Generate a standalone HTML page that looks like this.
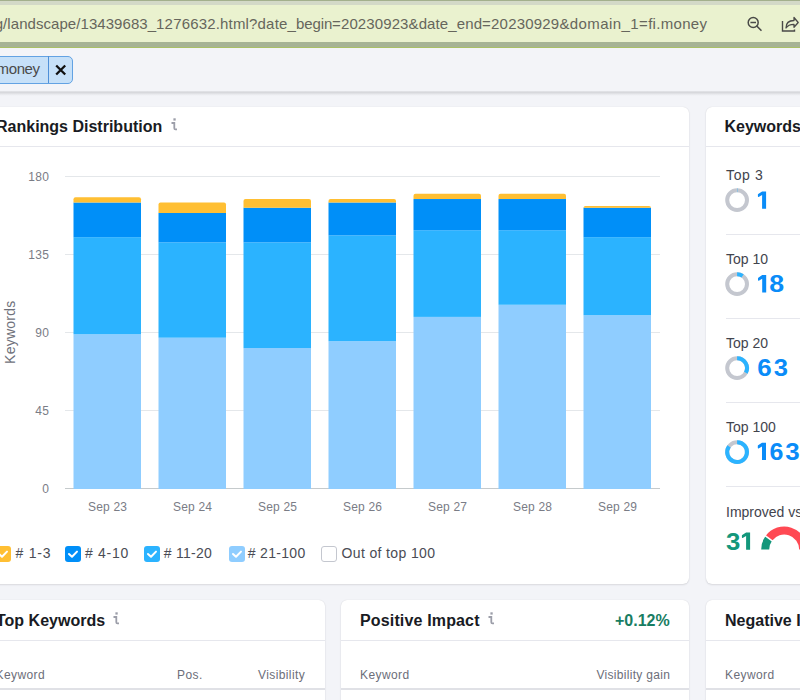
<!DOCTYPE html>
<html><head><meta charset="utf-8">
<style>
*{margin:0;padding:0;box-sizing:border-box}
html,body{width:800px;height:700px;overflow:hidden}
body{background:#f3f4f8;font-family:"Liberation Sans",sans-serif;position:relative;color:#191b23}
.abs{position:absolute}
#urlbar{left:0;top:0;width:800px;height:48px;background:#eaf2cf}
#urlbar .l0{left:0;top:0;width:800px;height:1px;background:#a3b08c}
#urlbar .l1{left:0;top:1px;width:800px;height:4px;background:#d3d9c7}
#urlbar .b1{left:0;top:42px;width:800px;height:5px;background:#a6b395}
#urlbar .b2{left:0;top:47px;width:800px;height:1px;background:#a9c066}
#url{left:0;top:13.5px;font-size:15px;color:#66665c;white-space:nowrap;line-height:20px;width:730px;height:20px}
#url span{position:absolute;top:0}
#shadow{left:0;top:91px;width:800px;height:5px;background:linear-gradient(#e4e5e9,#d7d8dc 30%,#e2e3e7 55%,#eeeff3 80%,#f3f4f8)}
.card{position:absolute;background:#fff;border-radius:6px;box-shadow:0 0 1px rgba(25,27,35,0.15),0 1px 2px rgba(25,27,35,0.11)}
.title{position:absolute;font-weight:bold;font-size:16px;line-height:20px;color:#191b23;white-space:nowrap}
.sep{position:absolute;height:1px;background:#e6e7ed}
.info{position:absolute;font-family:"Liberation Serif",serif;font-style:italic;font-size:15px;color:#a3a5ad;line-height:16px}
.lbl{position:absolute;font-size:12px;color:#7a7c86;white-space:nowrap;line-height:14px}
.leg{position:absolute;font-size:14px;color:#4a4c55;white-space:nowrap;line-height:16px;letter-spacing:0.5px}
.cb{position:absolute;width:16px;height:16px;border-radius:3px}
.th{position:absolute;font-size:12px;color:#6c6e79;white-space:nowrap;line-height:16px;letter-spacing:0.4px}
.kl{position:absolute;font-size:14px;color:#42444d;white-space:nowrap;line-height:16px}
.kn{position:absolute;font-size:24px;font-weight:bold;color:#0a8cf8;white-space:nowrap;line-height:28px;transform:scaleX(1.08);transform-origin:0 0;letter-spacing:1.4px}
</style></head><body>

<div id="urlbar" class="abs">
  <div class="abs l0"></div><div class="abs l1"></div>
  <div class="abs b1"></div><div class="abs b2"></div>
  <div id="url" class="abs"><span style="left:-5.3px;letter-spacing:0.06px">g/landscape/13439683_</span><span style="left:156.1px;letter-spacing:0.175px">1276632.html</span><span style="left:249.1px;letter-spacing:0.17px">?date_</span><span style="left:296px;letter-spacing:-0.12px">begin</span><span style="left:332.1px;letter-spacing:0.107px">=20230923&amp;date_end</span><span style="left:482.1px;letter-spacing:0.2px">=20230929</span><span style="left:559.4px;letter-spacing:0.42px">&amp;domain_1</span><span style="left:639.1px;letter-spacing:0.3px">=fi.money</span></div>
  <svg class="abs" style="left:740px;top:10px" width="60" height="28" viewBox="740 10 60 28">
    <circle cx="753.2" cy="22.5" r="5" fill="none" stroke="#4a4a48" stroke-width="1.5"/>
    <line x1="750.4" y1="22.5" x2="756" y2="22.5" stroke="#4a4a48" stroke-width="1.5"/>
    <line x1="757" y1="26.2" x2="761" y2="30.3" stroke="#4a4a48" stroke-width="1.6" stroke-linecap="round"/>
    <path d="M782.5 21 V31 H794.5 V29.5" fill="none" stroke="#4a4a48" stroke-width="1.4"/>
    <path d="M786 28 C786 23 789 20.5 794 20.5 V17.5 L798.2 22.5 L794 27.3 V24.3 C790 24.3 787.5 25.5 786 28 Z" fill="none" stroke="#4a4a48" stroke-width="1.3" stroke-linejoin="round"/>
  </svg>
</div>

<!-- filter tag -->
<div class="abs" style="left:-60px;top:55.5px;width:133px;height:28px;background:#c6e0f8;border:1px solid #62a2e3;border-radius:5px"></div>
<div class="abs" style="left:48px;top:56px;width:1.3px;height:26.5px;background:#4f90d8"></div>
<div class="abs" style="left:-3.4px;top:60px;font-size:15px;line-height:18px;color:#4a4a4a;white-space:nowrap;letter-spacing:-0.4px">money</div>
<svg class="abs" style="left:55px;top:64px" width="12" height="12" viewBox="0 0 12 12"><path d="M1.2 1.5 L10.2 10.5 M10.2 1.5 L1.2 10.5" stroke="#111" stroke-width="2.3"/></svg>

<div id="shadow" class="abs"></div>

<!-- Rankings distribution card -->
<div class="card" style="left:-40px;top:106.5px;width:729px;height:477.5px"></div>
<div class="title" style="left:-4px;top:117px">Rankings Distribution</div>
<svg class="info" style="left:170.6px;top:118px" width="7" height="13" viewBox="0 0 7 13"><rect x="2.4" y="0.3" width="2.3" height="2.3" fill="#9c9ea9"/><path d="M0.5 5 H3.3 V10.2 Q3.3 11.3 4.4 11.3 H6" fill="none" stroke="#9c9ea9" stroke-width="1.8"/></svg>
<div class="sep" style="left:0;top:146px;width:689px"></div>

<svg class="abs" style="left:0;top:150px" width="689" height="360" viewBox="0 150 689 360">
  <g stroke="#e4e7ea" stroke-width="1">
    <line x1="65" y1="176.5" x2="660" y2="176.5"/>
    <line x1="65" y1="254.5" x2="660" y2="254.5"/>
    <line x1="65" y1="332.5" x2="660" y2="332.5"/>
    <line x1="65" y1="410.5" x2="660" y2="410.5"/>
  </g>
  <line x1="65" y1="488.5" x2="660" y2="488.5" stroke="#c5cacc" stroke-width="1"/>
  <g id="bars">
<rect x="73.5" y="334.23" width="67.5" height="154.77" fill="#8fcdff"/>
<rect x="73.5" y="237.17" width="67.5" height="97.07" fill="#2bb3ff"/>
<rect x="73.5" y="202.50" width="67.5" height="34.67" fill="#008ff8"/>
<path d="M73.5 202.50 V199.30 Q73.5 197.30 75.5 197.30 H139.0 Q141.0 197.30 141.0 199.30 V202.50 Z" fill="#ffbf33"/>
<rect x="158.5" y="337.70" width="67.5" height="151.30" fill="#8fcdff"/>
<rect x="158.5" y="242.37" width="67.5" height="95.33" fill="#2bb3ff"/>
<rect x="158.5" y="212.90" width="67.5" height="29.47" fill="#008ff8"/>
<path d="M158.5 212.90 V204.50 Q158.5 202.50 160.5 202.50 H224.0 Q226.0 202.50 226.0 204.50 V212.90 Z" fill="#ffbf33"/>
<rect x="243.5" y="348.10" width="67.5" height="140.90" fill="#8fcdff"/>
<rect x="243.5" y="242.37" width="67.5" height="105.73" fill="#2bb3ff"/>
<rect x="243.5" y="207.70" width="67.5" height="34.67" fill="#008ff8"/>
<path d="M243.5 207.70 V201.03 Q243.5 199.03 245.5 199.03 H309.0 Q311.0 199.03 311.0 201.03 V207.70 Z" fill="#ffbf33"/>
<rect x="328.5" y="341.17" width="67.5" height="147.83" fill="#8fcdff"/>
<rect x="328.5" y="235.43" width="67.5" height="105.73" fill="#2bb3ff"/>
<rect x="328.5" y="202.50" width="67.5" height="32.93" fill="#008ff8"/>
<path d="M328.5 202.50 V201.03 Q328.5 199.03 330.5 199.03 H394.0 Q396.0 199.03 396.0 201.03 V202.50 Z" fill="#ffbf33"/>
<rect x="413.5" y="316.90" width="67.5" height="172.10" fill="#8fcdff"/>
<rect x="413.5" y="230.23" width="67.5" height="86.67" fill="#2bb3ff"/>
<rect x="413.5" y="199.03" width="67.5" height="31.20" fill="#008ff8"/>
<path d="M413.5 199.03 V195.83 Q413.5 193.83 415.5 193.83 H479.0 Q481.0 193.83 481.0 195.83 V199.03 Z" fill="#ffbf33"/>
<rect x="498.5" y="304.77" width="67.5" height="184.23" fill="#8fcdff"/>
<rect x="498.5" y="230.23" width="67.5" height="74.53" fill="#2bb3ff"/>
<rect x="498.5" y="199.03" width="67.5" height="31.20" fill="#008ff8"/>
<path d="M498.5 199.03 V195.83 Q498.5 193.83 500.5 193.83 H564.0 Q566.0 193.83 566.0 195.83 V199.03 Z" fill="#ffbf33"/>
<rect x="583.5" y="315.17" width="67.5" height="173.83" fill="#8fcdff"/>
<rect x="583.5" y="237.17" width="67.5" height="78.00" fill="#2bb3ff"/>
<rect x="583.5" y="207.70" width="67.5" height="29.47" fill="#008ff8"/>
<path d="M583.5 207.70 V207.97 Q583.5 205.97 585.5 205.97 H649.0 Q651.0 205.97 651.0 207.97 V207.70 Z" fill="#ffbf33"/></g>
</svg>

<div class="lbl" style="left:9.4px;width:40px;text-align:right;letter-spacing:0.4px;top:170px">180</div>
<div class="lbl" style="left:9.4px;width:40px;text-align:right;letter-spacing:0.4px;top:248px">135</div>
<div class="lbl" style="left:9.4px;width:40px;text-align:right;letter-spacing:0.4px;top:326px">90</div>
<div class="lbl" style="left:9.4px;width:40px;text-align:right;letter-spacing:0.4px;top:404px">45</div>
<div class="lbl" style="left:9.4px;width:40px;text-align:right;letter-spacing:0.4px;top:482px">0</div>
<svg class="abs" style="left:0;top:290px" width="25" height="85" viewBox="0 290 25 85"><text transform="translate(15 332.2) rotate(-90)" text-anchor="middle" font-family="Liberation Sans" font-size="14" letter-spacing="0.25" fill="#6f717b">Keywords</text></svg>

<div class="lbl" style="left:88px;top:500px;letter-spacing:0.2px">Sep 23</div>
<div class="lbl" style="left:173px;top:500px;letter-spacing:0.2px">Sep 24</div>
<div class="lbl" style="left:258px;top:500px;letter-spacing:0.2px">Sep 25</div>
<div class="lbl" style="left:343px;top:500px;letter-spacing:0.2px">Sep 26</div>
<div class="lbl" style="left:428px;top:500px;letter-spacing:0.2px">Sep 27</div>
<div class="lbl" style="left:513px;top:500px;letter-spacing:0.2px">Sep 28</div>
<div class="lbl" style="left:598px;top:500px;letter-spacing:0.2px">Sep 29</div>

<!-- legend -->
<div class="cb" style="left:-5px;top:546px;background:#ffbf33"><svg width="16" height="16" viewBox="0 0 16 16" style="position:absolute;left:0;top:0"><path d="M4 8 L7 10.8 L12 5.6" fill="none" stroke="#fff" stroke-width="2" stroke-linecap="round" stroke-linejoin="round"/></svg></div>
<div class="leg" style="left:15.5px;top:544.5px;letter-spacing:0.78px">#&nbsp;1-3</div>
<div class="cb" style="left:65px;top:546px;background:#008ff8"><svg width="16" height="16" viewBox="0 0 16 16" style="position:absolute;left:0;top:0"><path d="M4 8 L7 10.8 L12 5.6" fill="none" stroke="#fff" stroke-width="2" stroke-linecap="round" stroke-linejoin="round"/></svg></div>
<div class="leg" style="left:85px;top:544.5px;letter-spacing:0.7px">#&nbsp;4-10</div>
<div class="cb" style="left:144px;top:546px;background:#2bb3ff"><svg width="16" height="16" viewBox="0 0 16 16" style="position:absolute;left:0;top:0"><path d="M4 8 L7 10.8 L12 5.6" fill="none" stroke="#fff" stroke-width="2" stroke-linecap="round" stroke-linejoin="round"/></svg></div>
<div class="leg" style="left:163.8px;top:544.5px;letter-spacing:0.27px">#&nbsp;11-20</div>
<div class="cb" style="left:228.5px;top:546px;background:#8fcdff"><svg width="16" height="16" viewBox="0 0 16 16" style="position:absolute;left:0;top:0"><path d="M4 8 L7 10.8 L12 5.6" fill="none" stroke="#fff" stroke-width="2" stroke-linecap="round" stroke-linejoin="round"/></svg></div>
<div class="leg" style="left:247.8px;top:544.5px;letter-spacing:0.31px">#&nbsp;21-100</div>
<div class="cb" style="left:321px;top:546px;background:#fff;border:1px solid #c4c7cf"></div>
<div class="leg" style="left:341.5px;top:544.5px;letter-spacing:0.37px">Out of top 100</div>

<!-- Keywords card -->
<div class="card" style="left:705.5px;top:106.5px;width:200px;height:477.5px"></div>
<div class="title" style="left:724.5px;top:117px">Keywords</div>
<div class="sep" style="left:706px;top:146px;width:94px"></div>

<div id="kw">
<div class="kl" style="left:726px;top:167px;letter-spacing:0.65px">Top 3</div>
<div class="sep" style="left:726px;top:234px;width:74px"></div>
<div class="kl" style="left:726px;top:251px">Top 10</div>
<div class="sep" style="left:726px;top:318px;width:74px"></div>
<div class="kl" style="left:726px;top:335px">Top 20</div>
<div class="sep" style="left:726px;top:402px;width:74px"></div>
<div class="kl" style="left:726px;top:419px">Top 100</div>
<div class="sep" style="left:726px;top:486px;width:74px"></div>
<div class="kl" style="left:726px;top:504px">Improved vs</div>
<svg class="abs" style="left:706px;top:147px" width="94" height="440" viewBox="706 147 94 440">
<circle cx="737.1" cy="200.1" r="9.9" fill="none" stroke="#c4c7cf" stroke-width="4"/>
<path d="M737.10 190.20 A9.9 9.9 0 0 1 737.42 190.21" fill="none" stroke="#2bb3ff" stroke-width="4"/>
<path transform="translate(757.90 191.40) scale(1 1.018)" d="M0.3 2.5 L4.2 0 H8.2 V17 H4.2 V3.6 L1.2 5.3 Q0 5.9 0 4.8 V3.3 Q0 2.8 0.3 2.5 Z" fill="#0a8cf8"/>
<circle cx="737.1" cy="284.1" r="9.9" fill="none" stroke="#c4c7cf" stroke-width="4"/>
<path d="M737.10 274.20 A9.9 9.9 0 0 1 742.60 275.87" fill="none" stroke="#2bb3ff" stroke-width="4"/>
<path transform="translate(758.00 275.10) scale(1 1.018)" d="M0.3 2.5 L4.2 0 H8.2 V17 H4.2 V3.6 L1.2 5.3 Q0 5.9 0 4.8 V3.3 Q0 2.8 0.3 2.5 Z" fill="#0a8cf8"/>
<text transform="translate(769.17 292.40) scale(1.113 1.018)" font-family="Liberation Sans" font-weight="bold" font-size="24" fill="#0a8cf8">8</text>
<circle cx="737.1" cy="368.1" r="9.9" fill="none" stroke="#c4c7cf" stroke-width="4"/>
<path d="M737.10 358.20 A9.9 9.9 0 0 1 745.83 372.77" fill="none" stroke="#2bb3ff" stroke-width="4"/>
<text transform="translate(757.28 376.20) scale(1.081 1.018)" font-family="Liberation Sans" font-weight="bold" font-size="24" fill="#0a8cf8">6</text>
<text transform="translate(773.68 376.20) scale(1.065 1.018)" font-family="Liberation Sans" font-weight="bold" font-size="24" fill="#0a8cf8">3</text>
<circle cx="737.1" cy="452.1" r="9.9" fill="none" stroke="#c4c7cf" stroke-width="4"/>
<path d="M737.10 442.20 A9.9 9.9 0 1 1 729.05 446.33" fill="none" stroke="#2bb3ff" stroke-width="4"/>
<path transform="translate(757.80 442.80) scale(1 1.018)" d="M0.3 2.5 L4.2 0 H8.2 V17 H4.2 V3.6 L1.2 5.3 Q0 5.9 0 4.8 V3.3 Q0 2.8 0.3 2.5 Z" fill="#0a8cf8"/>
<text transform="translate(769.59 460.10) scale(1.040 1.018)" font-family="Liberation Sans" font-weight="bold" font-size="24" fill="#0a8cf8">6</text>
<text transform="translate(785.28 460.10) scale(1.081 1.018)" font-family="Liberation Sans" font-weight="bold" font-size="24" fill="#0a8cf8">3</text>
<text transform="translate(725.98 549.70) scale(1.073 1.018)" font-family="Liberation Sans" font-weight="bold" font-size="24" fill="#13977b">3</text>
<path transform="translate(741.90 532.40) scale(1 1.018)" d="M0.3 2.5 L4.2 0 H8.2 V17 H4.2 V3.6 L1.2 5.3 Q0 5.9 0 4.8 V3.3 Q0 2.8 0.3 2.5 Z" fill="#13977b"/>
<path d="M765.2 549.5 A19 19 0 0 1 768.83 538.33" fill="none" stroke="#13977b" stroke-width="8"/>
<path d="M768.83 538.33 A19 19 0 0 1 803.2 549.5" fill="none" stroke="#ff4953" stroke-width="8"/>
<line x1="772.87" y1="541.27" x2="764.78" y2="535.39" stroke="#fff" stroke-width="1.5"/>
</svg>
</div>

<!-- bottom cards -->
<div class="card" style="left:-40px;top:600px;width:364.8px;height:200px"></div>
<div class="title" style="left:-4px;top:611px">Top Keywords</div>
<svg class="info" style="left:112.6px;top:612px" width="7" height="13" viewBox="0 0 7 13"><rect x="2.4" y="0.3" width="2.3" height="2.3" fill="#9c9ea9"/><path d="M0.5 5 H3.3 V10.2 Q3.3 11.3 4.4 11.3 H6" fill="none" stroke="#9c9ea9" stroke-width="1.8"/></svg>
<div class="sep" style="left:0;top:640px;width:325px"></div>
<div class="th" style="left:-4.5px;top:666.5px">Keyword</div>
<div class="th" style="left:177px;top:666.5px">Pos.</div>
<div class="th" style="left:258px;top:666.5px">Visibility</div>
<div class="sep" style="left:0;top:688px;width:325px;height:2px;background:#e0e1e6"></div>

<div class="card" style="left:340.8px;top:600px;width:348.6px;height:200px"></div>
<div class="title" style="left:360px;top:611px;letter-spacing:0.15px">Positive Impact</div>
<svg class="info" style="left:487.6px;top:612px" width="7" height="13" viewBox="0 0 7 13"><rect x="2.4" y="0.3" width="2.3" height="2.3" fill="#9c9ea9"/><path d="M0.5 5 H3.3 V10.2 Q3.3 11.3 4.4 11.3 H6" fill="none" stroke="#9c9ea9" stroke-width="1.8"/></svg>
<div class="title" style="left:615px;top:611px;color:#187d62">+0.12%</div>
<div class="sep" style="left:341px;top:640px;width:348px"></div>
<div class="th" style="left:360px;top:666.5px">Keyword</div>
<div class="th" style="left:596.5px;top:666.5px;letter-spacing:0.3px">Visibility gain</div>
<div class="sep" style="left:341px;top:688px;width:348px;height:2px;background:#e0e1e6"></div>

<div class="card" style="left:705.6px;top:600px;width:200px;height:200px"></div>
<div class="title" style="left:725px;top:611px">Negative Impact</div>
<div class="sep" style="left:706px;top:640px;width:94px"></div>
<div class="th" style="left:725px;top:666.5px">Keyword</div>
<div class="sep" style="left:706px;top:688px;width:94px;height:2px;background:#e0e1e6"></div>

<script>
</script>
</body></html>
